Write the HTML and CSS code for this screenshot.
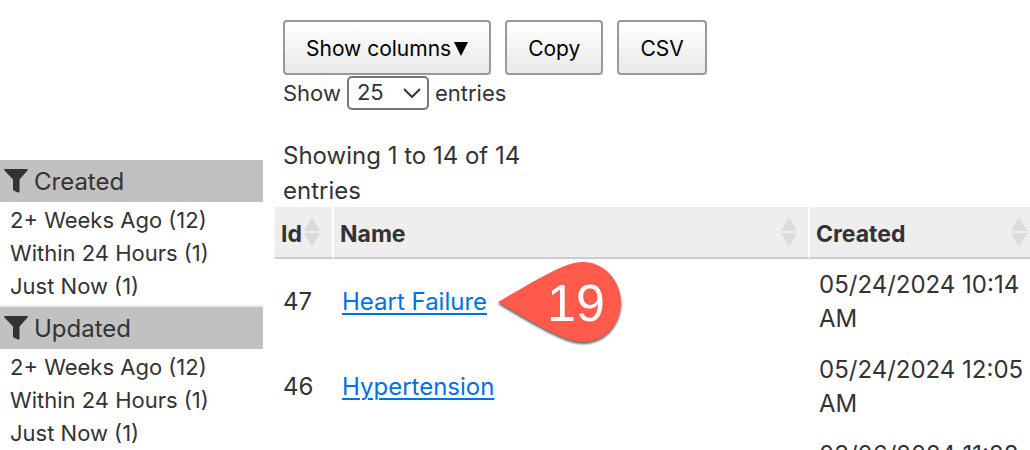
FILE: index.html
```html
<!DOCTYPE html>
<html lang="en">
<head>
<meta charset="utf-8">
<title>Entries</title>
<link rel="stylesheet" href="styles.css">
</head>
<body>
<div class="page">
  <aside class="sidebar">
    <section class="facet">
      <h2 class="facet-title"><svg class="funnel" viewBox="0 0 24 24" aria-hidden="true"><path d="M1 0h22q1.500 0 .5 1.500L15.500 10.500v12q0 1.500-1.500 1L9.500 21.500Q9 21 9 20V10.500L.5 1.500Q-.5 0 1 0z"/></svg>Created</h2>
      <ul class="facet-list"><li>2+ Weeks Ago (12)</li><li>Within 24 Hours (1)</li><li>Just Now (1)</li></ul>
    </section>
    <section class="facet facet-next">
      <h2 class="facet-title"><svg class="funnel" viewBox="0 0 24 24" aria-hidden="true"><path d="M1 0h22q1.500 0 .5 1.500L15.500 10.500v12q0 1.500-1.500 1L9.500 21.500Q9 21 9 20V10.500L.5 1.500Q-.5 0 1 0z"/></svg>Updated</h2>
      <ul class="facet-list"><li>2+ Weeks Ago (12)</li><li>Within 24 Hours (1)</li><li>Just Now (1)</li></ul>
    </section>
  </aside>
  <main class="main">
    <div class="toolbar">
      <button class="button" type="button">Show columns<svg class="caret" viewBox="0 0 14 14" aria-hidden="true"><path d="M0 0h14L7 14z"/></svg></button>
      <button class="button" type="button">Copy</button>
      <button class="button" type="button">CSV</button>
    </div>
    <div class="length">
      <label for="length">Show</label>
      <span class="select-box"><select class="select" id="length"><option>25</option></select><svg class="chevron" viewBox="0 0 18 10" aria-hidden="true"><path d="M1 1l8 8 8-8"/></svg></span>
      <span>entries</span>
    </div>
    <p class="info">Showing 1 to 14 of 14 entries</p>
    <table class="table">
      <colgroup><col class="col-id"><col class="col-name"><col class="col-created"></colgroup>
      <thead>
        <tr>
          <th scope="col"><div class="head">Id<svg class="sort" viewBox="0 0 16 30" aria-hidden="true"><path d="M8 0l8 14H0zM0 16h16L8 30z"/></svg></div></th>
          <th scope="col"><div class="head">Name<svg class="sort" viewBox="0 0 16 30" aria-hidden="true"><path d="M8 0l8 14H0zM0 16h16L8 30z"/></svg></div></th>
          <th scope="col"><div class="head">Created<svg class="sort" viewBox="0 0 16 30" aria-hidden="true"><path d="M8 0l8 14H0zM0 16h16L8 30z"/></svg></div></th>
        </tr>
      </thead>
      <tbody>
        <tr>
          <td>47</td>
          <td><span class="marked"><a class="link" href="#heart-failure">Heart Failure</a>
            <svg class="callout" viewBox="0 0 132 90" role="img" aria-label="19">
              <path class="callout-shape" d="M4 43C29 29 60 9 80 4C105-2 127 18 127 43.500C127 69 105 88 80 82C60 77 29 58 4 43z"/>
              <text class="callout-text" x="82" y="62">19</text>
            </svg></span></td>
          <td>05/24/2024 10:14 AM</td>
        </tr>
        <tr><td>46</td><td><a class="link" href="#hypertension">Hypertension</a></td><td>05/24/2024 12:05 AM</td></tr>
        <tr><td></td><td></td><td>03/06/2024 11:28 AM</td></tr>
      </tbody>
    </table>
  </main>
</div>
</body>
</html>
```
FILE: styles.css
```css
* { box-sizing: border-box; }
body {
  margin: 0;
  background: #fff;
  color: #333;
  font-family: Inter, "Liberation Sans", sans-serif;
  font-size: 24px;
  line-height: 34px;
}
.page {
  display: grid;
  grid-template-columns: 263px minmax(0, 1fr);
  column-gap: 12px;
  height: 100vh;
  overflow: hidden;
}
.sidebar { padding-top: 160px; }
.facet-next { border-top: 2px solid #eee; }
.facet-title {
  display: flex;
  align-items: center;
  gap: 6px;
  height: 42px;
  margin: 0;
  padding: 2px 4px 0;
  background: #c1c1c1;
  font-size: 24px;
  font-weight: 400;
}
.funnel { width: 24px; height: 24px; margin-bottom: 2px; fill: #333; }
.facet-list {
  margin: 0;
  padding: 2px 10px;
  list-style: none;
  font-size: 22px;
  line-height: 33px;
}
.toolbar { display: flex; gap: 14px; padding: 20px 8px 0; }
.button {
  display: flex;
  align-items: center;
  height: 55px;
  padding: 2px 21px 0;
  border: 2px solid #999;
  border-radius: 4px;
  background: linear-gradient(#fff, #e9e9e9);
  color: #000;
  font: inherit;
  font-size: 21px;
}
.caret { width: 14px; height: 14px; margin-left: 3px; }
.length {
  display: flex;
  align-items: center;
  gap: 6px;
  padding: 1px 8px 0;
  font-size: 22px;
}
.select-box { display: grid; align-items: center; }
.select {
  grid-area: 1 / 1;
  appearance: none;
  width: 82px;
  height: 34px;
  padding: 0 8px 3px;
  border: 2px solid #767676;
  border-radius: 5px;
  background: #fff;
  color: #333;
  font: inherit;
  line-height: 26px;
}
.chevron {
  grid-area: 1 / 1;
  justify-self: end;
  width: 18px;
  height: 10px;
  margin-right: 8px;
  fill: none;
  stroke: #333;
  stroke-width: 2;
  pointer-events: none;
}
.info {
  width: 270px;
  margin: 0 8px;
  padding-top: 28px;
  line-height: 35px;
}
.table {
  width: 100%;
  margin-top: -1px;
  table-layout: fixed;
  border-collapse: separate;
  border-spacing: 0;
}
.col-id { width: 59px; }
.col-name { width: 476px; }
th {
  padding: 0 6px;
  border-right: 2px solid #fff;
  border-bottom: 2px solid #ccc;
  background: #eee;
  font-size: 23px;
  font-weight: 700;
  text-align: left;
}
th:last-child { padding-right: 3px; border-right: 0; }
.head {
  display: flex;
  align-items: center;
  justify-content: space-between;
  height: 50px;
  padding-top: 3px;
}
.sort { flex: none; width: 16px; height: 30px; margin: -3px 5px 0; fill: #dcdcdc; }
th:first-child .sort { margin: -3px 6px 0 0; }
th:last-child .sort { margin-right: 0; }
td { padding: 9px 8px 8px; }
td:last-child { padding: 9px 0 8px 9px; }
.link { color: #0071e3; text-decoration: underline; text-decoration-thickness: 2px; text-underline-offset: 3px; }
.marked { position: relative; display: inline-block; }
.callout {
  position: absolute;
  left: 100%;
  top: 50%;
  width: 132px;
  height: 90px;
  margin: -43px 0 0 7px;
  filter: drop-shadow(0 2px 1px #0009);
}
.callout-shape { fill: #ff5a4c; }
.callout-text {
  fill: #fff;
  font-family: "Liberation Sans", sans-serif;
  font-size: 52px;
  text-anchor: middle;
}
```
